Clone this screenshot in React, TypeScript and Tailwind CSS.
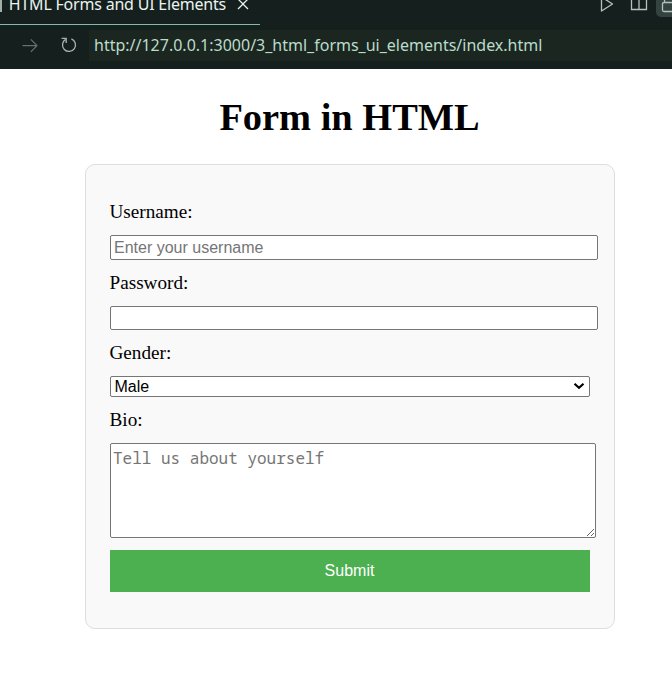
import { VscArrowRight, VscClose } from 'react-icons/vsc';

const labelClass = "-ml-[0.5px] flex h-[22px] items-center text-[19.2px] leading-[22px]";
const fieldClass = "block rounded-[2px] border border-[#767676] bg-white font-['Liberation_Sans',sans-serif] text-[16px] text-black outline-none placeholder:text-[#757575]";

function ReloadIcon() {
  return (
    <svg className="ml-[20px]" width="18" height="18" viewBox="0 0 18 18" fill="none" stroke="#a9b4b0" strokeWidth="1.3">
      <path d="M11.4 2.9A6.5 6.5 0 1 1 5.6 3.4" />
      <path d="M1.6 2.4H6.2V7" />
    </svg>
  );
}

function BrowserBar() {
  return (
    <header className="h-[69px] overflow-hidden bg-[#151f1d] font-['Noto_Sans',sans-serif]">
      <div className="flex h-[25px] justify-between">
        <div className="flex h-[25px] w-[260px] justify-end border-b border-[#84b9ac] text-[#eaf3ef]">
          <span className="-mt-[8px] mr-[7px] text-[16px] leading-[24px] tracking-[-0.21px] whitespace-pre"><span className="mr-[7px] inline-block h-[16px] w-[2px] bg-[#9fb0aa] align-[-2px]" />HTML Forms and UI Elements</span>
          <VscClose className="-mt-[6px] mr-[7px] size-[20px] shrink-0" />
        </div>
        <svg width="76" height="25" viewBox="596 0 76 25" fill="none" stroke="#b5c1bd" strokeWidth="1.3">
          <path d="M601.5 -3V11L612.5 4Z" strokeLinejoin="round" />
          <path d="M631.5 -4V9.5H646.5V-4M639 -4V9.5" />
          <rect x="656" y="-8" width="26" height="25" rx="5" fill="#33433f" stroke="none" />
          <path d="M680 2.5H664Q662.5 2.5 662.5 4V10Q662.5 11.5 664 11.5H680M664.5 2.5V-4" />
        </svg>
      </div>
      <div className="flex h-[44px] items-start pt-[5px]">
        <div className="flex h-[31px] w-[89px] shrink-0 items-center pb-[1px]">
          <VscArrowRight className="ml-[20px] size-[20px] text-[#65706c]" />
          <ReloadIcon />
        </div>
        <div className="flex h-[31px] flex-1 items-center bg-[#1c2620] pb-[2px] pl-[5px] text-[16px] text-[#b9dccb]">
          http://127.0.0.1:3000/3_html_forms_ui_elements/index.html
        </div>
      </div>
    </header>
  );
}

export default function App() {
  return (
    <div className="h-[698px] w-[672px] overflow-hidden bg-white font-['Liberation_Serif',serif] text-black">
      <BrowserBar />
      <main className="pl-[85px]">
        <h1 className="mt-[26px] h-[44px] w-[529px] text-center text-[38.4px] leading-[44px] font-bold">Form in HTML</h1>
        <form
          className="mt-[25px] flex h-[465px] w-[530px] flex-col rounded-[10px] border border-[#ddd] bg-[#f9f9f9] px-[24px] pt-[36px]"
          onSubmit={(e) => e.preventDefault()}
        >
          <label htmlFor="username" className={labelClass}>Username:</label>
          <input id="username" placeholder="Enter your username" className={`${fieldClass} mt-[12px] h-[25px] w-[488px] px-[3px]`} />
          <label htmlFor="password" className={`${labelClass} mt-[12px]`}>Password:</label>
          <input id="password" type="password" className={`${fieldClass} mt-[12px] h-[24px] w-[488px] px-[3px]`} />
          <label htmlFor="gender" className={`${labelClass} mt-[12px]`}>Gender:</label>
          <div className={`${fieldClass} mt-[12px] flex h-[21px] w-[480px] items-center justify-between pr-[4px] pl-[3.5px]`}>
            <span id="gender" className="leading-[19px]">Male</span>
            <svg className="-mt-[1px]" width="12" height="10" viewBox="0 0 12 10" fill="none" stroke="black" strokeWidth="2.2">
              <path d="M1.5 2.8L6 6.8L10.5 2.8" />
            </svg>
          </div>
          <label htmlFor="bio" className={`${labelClass} mt-[12px]`}>Bio:</label>
          <textarea
            id="bio"
            placeholder="Tell us about yourself"
            className="mt-[12px] block h-[95px] w-[486px] resize rounded-[2px] border border-[#767676] bg-white p-[2px] pt-[3px] font-['Noto_Sans_Mono','DejaVu_Sans_Mono',monospace] text-[16px] leading-[22px] outline-none placeholder:text-[#757575]"
          />
          <button className="mt-[12px] h-[42px] w-[480px] bg-[#4caf50] pr-[1px] font-['Liberation_Sans',sans-serif] text-[16px] text-white">Submit</button>
        </form>
      </main>
    </div>
  );
}
